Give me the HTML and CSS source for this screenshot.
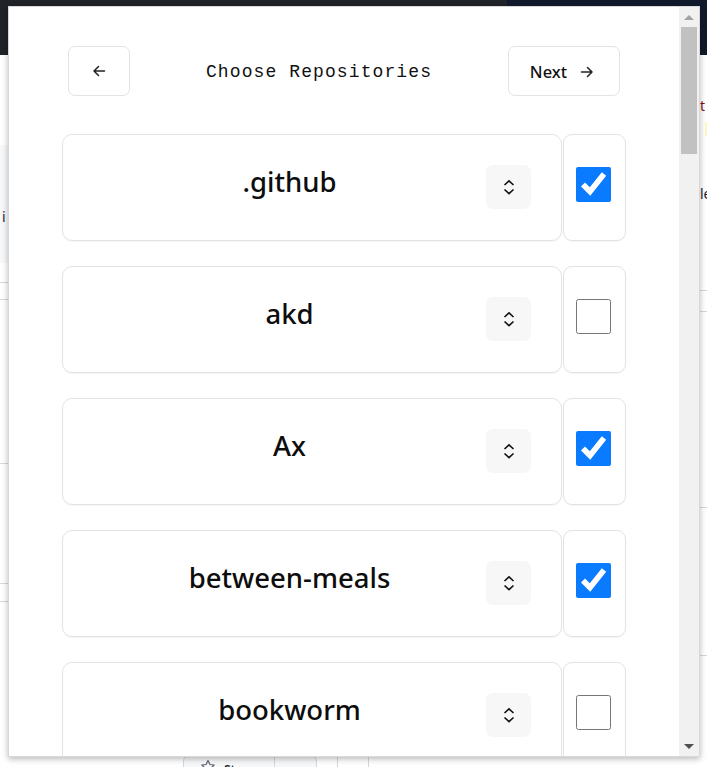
FILE: index.html
```html
<!DOCTYPE html>
<html lang="en">
<head>
<meta charset="utf-8">
<title>Choose Repositories</title>
<link rel="stylesheet" href="styles.css">
</head>
<body>
<div class="page">
  <div class="gh-header"><div class="gh-header-right"></div></div>
  <div class="gh-left-box"><span class="gh-letter">i</span></div>
  <div class="gh-line l1"></div>
  <div class="gh-line l2"></div>
  <div class="gh-line l3"></div>
  <div class="gh-line l4"></div>
  <div class="gh-line l5"></div>
  <div class="gh-right-text t1">t</div>
  <div class="gh-right-text t2">le</div>
  <div class="gh-right-mark"></div>
  <div class="gh-rline r1"></div>
  <div class="gh-rline r2"></div>
  <div class="gh-rline r3"></div>
  <div class="gh-rline r4"></div>
  <div class="gh-actions">
    <div class="gh-star">
      <svg class="gh-star-icon" viewBox="0 0 16 16" width="16" height="16"><path d="M8 1.5l1.9 4 4.3.5-3.2 3 .9 4.3L8 11.1 4.1 13.3 5 9 1.8 6l4.3-.5z" fill="none" stroke="#59636e" stroke-width="1.2" stroke-linejoin="round"/></svg>
      <span class="gh-star-text">Star</span>
    </div>
    <div class="gh-star-drop"><span class="gh-drop-mark"></span></div>
    <div class="gh-vline"></div>
    <div class="gh-vline v2"></div>
  </div>
</div>

<div class="popup">
  <div class="popup-content">
    <header class="top-bar">
      <button class="nav-btn back-btn" aria-label="Back">
        <svg viewBox="0 0 16 16" width="16" height="16"><path d="M13.5 8H3M7.5 3.5L3 8l4.5 4.5" fill="none" stroke="#222" stroke-width="1.5" stroke-linecap="round" stroke-linejoin="round"/></svg>
      </button>
      <h1 class="title">Choose Repositories</h1>
      <button class="nav-btn next-btn">
        <span>Next</span>
        <svg viewBox="0 0 16 16" width="16" height="16"><path d="M2.5 8H13M8.5 3.5L13 8l-4.5 4.5" fill="none" stroke="#222" stroke-width="1.5" stroke-linecap="round" stroke-linejoin="round"/></svg>
      </button>
    </header>

    <div class="repo-list">
      <div class="repo-row">
        <div class="repo-card"><span class="repo-name">.github</span><button class="sort-btn" aria-label="Reorder"><svg viewBox="0 0 12 16" width="12" height="16"><path d="M1.5 6L6 1.8 10.5 6M1.5 10.5L6 14.7l4.5-4.2" fill="none" stroke="#111" stroke-width="1.6"/></svg></button></div>
        <div class="check-card"><input class="repo-check" type="checkbox" checked></div>
      </div>
      <div class="repo-row">
        <div class="repo-card"><span class="repo-name">akd</span><button class="sort-btn" aria-label="Reorder"><svg viewBox="0 0 12 16" width="12" height="16"><path d="M1.5 6L6 1.8 10.5 6M1.5 10.5L6 14.7l4.5-4.2" fill="none" stroke="#111" stroke-width="1.6"/></svg></button></div>
        <div class="check-card"><input class="repo-check" type="checkbox"></div>
      </div>
      <div class="repo-row">
        <div class="repo-card"><span class="repo-name">Ax</span><button class="sort-btn" aria-label="Reorder"><svg viewBox="0 0 12 16" width="12" height="16"><path d="M1.5 6L6 1.8 10.5 6M1.5 10.5L6 14.7l4.5-4.2" fill="none" stroke="#111" stroke-width="1.6"/></svg></button></div>
        <div class="check-card"><input class="repo-check" type="checkbox" checked></div>
      </div>
      <div class="repo-row">
        <div class="repo-card"><span class="repo-name">between-meals</span><button class="sort-btn" aria-label="Reorder"><svg viewBox="0 0 12 16" width="12" height="16"><path d="M1.5 6L6 1.8 10.5 6M1.5 10.5L6 14.7l4.5-4.2" fill="none" stroke="#111" stroke-width="1.6"/></svg></button></div>
        <div class="check-card"><input class="repo-check" type="checkbox" checked></div>
      </div>
      <div class="repo-row">
        <div class="repo-card"><span class="repo-name">bookworm</span><button class="sort-btn" aria-label="Reorder"><svg viewBox="0 0 12 16" width="12" height="16"><path d="M1.5 6L6 1.8 10.5 6M1.5 10.5L6 14.7l4.5-4.2" fill="none" stroke="#111" stroke-width="1.6"/></svg></button></div>
        <div class="check-card"><input class="repo-check" type="checkbox"></div>
      </div>
    </div>
  </div>
  <div class="scrollbar">
    <div class="sb-arrow up"></div>
    <div class="sb-track"><div class="sb-thumb"></div></div>
    <div class="sb-arrow down"></div>
  </div>
</div>
</body>
</html>
```

FILE: styles.css
```css
* { box-sizing: border-box; }

html, body {
  margin: 0;
  padding: 0;
  width: 707px;
  height: 767px;
  overflow: hidden;
  background: #ffffff;
  font-family: "Noto Sans", "Open Sans", sans-serif;
}

/* ---------- background page (behind popup) ---------- */
.page {
  position: relative;
  width: 707px;
  height: 767px;
  background: #ffffff;
}

.gh-header {
  height: 55px;
  background: #202328;
  position: relative;
}
.gh-header-right {
  position: absolute;
  right: 0;
  top: 0;
  width: 200px;
  height: 55px;
  background: #111a2c;
}

.gh-left-box {
  position: absolute;
  left: 0;
  top: 145px;
  width: 20px;
  height: 118px;
  background: #f6f8fa;
}
.gh-letter {
  position: absolute;
  left: 2px;
  top: 62px;
  font-size: 14px;
  color: #1f2328;
}

.gh-line {
  position: absolute;
  left: 0;
  width: 20px;
  height: 1px;
  background: #d1d9e0;
}
.l1 { top: 282px; }
.l2 { top: 299px; }
.l3 { top: 463px; }
.l4 { top: 583px; }
.l5 { top: 601px; }

.gh-right-text {
  position: absolute;
  left: 700px;
  font-size: 14px;
  color: #1f2328;
}
.t1 { top: 96px; color: #8a1010; }
.t2 { top: 184px; }
.gh-right-mark {
  position: absolute;
  left: 705px;
  top: 122px;
  width: 2px;
  height: 14px;
  background: #fff8c5;
}
.gh-rline {
  position: absolute;
  left: 699px;
  width: 8px;
  height: 1px;
  background: #d1d9e0;
}
.r1 { top: 290px; }
.r2 { top: 311px; }
.r3 { top: 507px; }
.r4 { top: 655px; }

.gh-actions {
  position: absolute;
  left: 183px;
  top: 755px;
  height: 30px;
  display: flex;
  align-items: flex-start;
}
.gh-star {
  width: 92px;
  height: 30px;
  border: 1px solid #d1d9e0;
  border-radius: 6px 0 0 6px;
  background: #f6f8fa;
  display: flex;
  align-items: flex-start;
  padding: 3px 0 0 16px;
  gap: 8px;
}
.gh-star-text {
  font-size: 12px;
  font-weight: 600;
  color: #25292e;
  margin-top: 2px;
}
.gh-star-drop {
  width: 42px;
  height: 30px;
  border: 1px solid #d1d9e0;
  border-left: 0;
  border-radius: 0 6px 6px 0;
  background: #f6f8fa;
}
.gh-vline {
  width: 1px;
  height: 20px;
  background: #d1d9e0;
  margin-left: 20px;
}
.gh-vline.v2 { margin-left: 30px; }

/* ---------- popup window ---------- */
.popup {
  position: absolute;
  left: 8px;
  top: 6px;
  width: 692px;
  height: 751px;
  background: #ffffff;
  border: 1px solid #d9d9d9;
  box-shadow: 0 2px 6px rgba(0, 0, 0, 0.28);
  display: flex;
  overflow: hidden;
}

.popup-content {
  flex: 1;
  padding: 39px 53px 0 53px;
  overflow: hidden;
}

.top-bar {
  display: flex;
  align-items: center;
  justify-content: space-between;
  margin: 0 6px;
  height: 50px;
}

.nav-btn {
  height: 50px;
  background: #ffffff;
  border: 1px solid #e3e3e3;
  border-radius: 7px;
  display: flex;
  align-items: center;
  justify-content: center;
  padding: 0;
  cursor: pointer;
}
.back-btn { width: 62px; }
.next-btn {
  width: 112px;
  gap: 12px;
  font-family: "Noto Sans", sans-serif;
  font-size: 16.5px;
  font-weight: 500;
  color: #111;
  padding-top: 1px;
  padding-right: 3px;
}

.title {
  margin: 0;
  padding-top: 2px;
  font-family: "Liberation Mono", "DejaVu Sans Mono", monospace;
  font-size: 18px;
  font-weight: 400;
  letter-spacing: 1.1px;
  color: #111;
}

.repo-list {
  margin-top: 38px;
  display: flex;
  flex-direction: column;
  gap: 25px;
}

.repo-row {
  display: grid;
  grid-template-columns: 500px 63px;
  gap: 1px;
  height: 107px;
}

.repo-card {
  border: 1px solid #e3e3e3;
  border-radius: 10px;
  display: flex;
  align-items: center;
  padding-right: 30px;
  box-shadow: 0 1px 1px rgba(0, 0, 0, 0.04);
}

.repo-name {
  flex: 1;
  text-align: center;
  padding-left: 30px;
  padding-bottom: 13px;
  font-size: 27.5px;
  font-weight: 500;
  color: #0d0d0d;
}

.sort-btn {
  width: 45px;
  height: 44px;
  background: #f7f7f7;
  border: 0;
  border-radius: 7px;
  display: flex;
  align-items: center;
  justify-content: center;
  padding: 0;
  margin-bottom: 2px;
}

.check-card {
  border: 1px solid #e3e3e3;
  border-radius: 9px;
  display: flex;
  align-items: center;
  justify-content: center;
  padding-right: 2px;
  padding-bottom: 6px;
  box-shadow: 0 1px 1px rgba(0, 0, 0, 0.04);
}

.repo-check {
  width: 35px;
  height: 35px;
  margin: 0;
  accent-color: #0a7bff;
}

/* ---------- fake scrollbar ---------- */
.scrollbar {
  width: 20px;
  background: #f1f1f1;
  display: flex;
  flex-direction: column;
  align-items: center;
}
.sb-arrow {
  height: 20px;
  width: 20px;
  display: flex;
  align-items: center;
  justify-content: center;
}
.sb-arrow.up::before {
  content: "";
  border-left: 5px solid transparent;
  border-right: 5px solid transparent;
  border-bottom: 5px solid #a3a3a3;
}
.sb-arrow.down::before {
  content: "";
  border-left: 5px solid transparent;
  border-right: 5px solid transparent;
  border-top: 5px solid #505050;
}
.sb-track {
  flex: 1;
  width: 100%;
  padding: 0 2px;
}
.sb-thumb {
  height: 127px;
  background: #c1c1c1;
}
```
